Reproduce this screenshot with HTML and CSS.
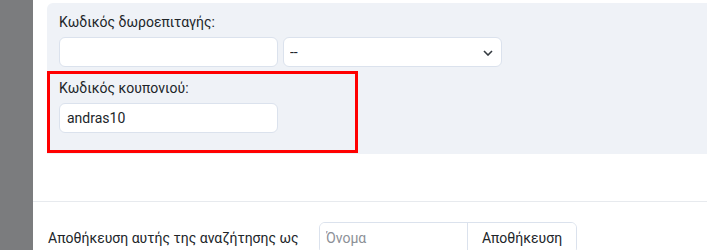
FILE: index.html
```html
<!DOCTYPE html>
<html lang="el">
<head>
    <meta charset="UTF-8">
    <meta name="viewport" content="width=device-width, initial-scale=1.0">
    <title>Αναζήτηση</title>
    <link rel="stylesheet" href="styles.css">
</head>
<body>
    <div class="screen">
        <div class="backdrop"></div>

        <div class="modal">
            <div class="modal-body">
                <div class="filter-panel">
                    <div class="form-group">
                        <label class="form-label">Κωδικός δωροεπιταγής:</label>
                        <div class="input-row">
                            <input type="text" class="form-input">
                            <div class="select-wrap">
                                <select class="form-select">
                                    <option>--</option>
                                </select>
                                <svg class="select-arrow" width="10" height="6" viewBox="0 0 10 6">
                                    <path d="M1 1l4 4 4-4" fill="none" stroke="#343a40" stroke-width="1.6"/>
                                </svg>
                            </div>
                        </div>
                    </div>

                    <div class="form-group highlighted">
                        <label class="form-label">Κωδικός κουπονιού:</label>
                        <input type="text" class="form-input" value="andras10">
                    </div>
                </div>
            </div>

            <div class="modal-footer">
                <span class="save-label">Αποθήκευση αυτής της αναζήτησης ως</span>
                <div class="input-group">
                    <input type="text" class="group-input" placeholder="Όνομα">
                    <button class="group-button">Αποθήκευση</button>
                </div>
            </div>
        </div>
    </div>
</body>
</html>
```

FILE: styles.css
```css
html, body {
    margin: 0;
    padding: 0;
    overflow: hidden;
}
body {
    font-family: Roboto, "Noto Sans", "Liberation Sans", sans-serif;
    font-size: 14px;
    line-height: 1.5;
    color: #212529;
    background-color: #fff;
}
.screen {
    display: flex;
    height: 250px;
    overflow: hidden;
}
.backdrop {
    width: 33px;
    flex-shrink: 0;
    background-color: #7b7c7e;
}
.modal {
    flex: 1;
    display: flex;
    flex-direction: column;
    background-color: #fff;
}
.modal-body {
    flex-shrink: 0;
    padding: 3px 0 0 14px;
    height: 198px;
    border-bottom: 1px solid #e7eaee;
}
.filter-panel {
    background-color: #eff2f7;
    border-top-left-radius: 6px;
    padding-top: 7px;
    height: 144px;
}
.form-group {
    padding-left: 12px;
}
.form-label {
    display: block;
    margin-bottom: 3px;
    line-height: 24px;
}
.input-row {
    display: flex;
    gap: 5px;
}
.form-input,
.form-select {
    box-sizing: border-box;
    width: 219px;
    height: 30px;
    padding: 0 7px;
    border: 1px solid #dbe2ed;
    border-radius: 6px;
    background-color: #fff;
    font-family: inherit;
    font-size: 14px;
    color: #212529;
    outline: none;
}
.select-wrap {
    position: relative;
}
.form-select {
    appearance: none;
    -webkit-appearance: none;
    padding-left: 6px;
}
.select-arrow {
    position: absolute;
    right: 9px;
    top: 13px;
}
.highlighted {
    box-sizing: border-box;
    width: 311px;
    margin-top: 4px;
    padding: 2px 9px 17px 9px;
    border: 3px solid #ff0000;
}
.modal-footer {
    flex-shrink: 0;
    display: flex;
    align-items: center;
    padding: 20px 0 0 15px;
}
.save-label {
    width: 271px;
    flex-shrink: 0;
}
.input-group {
    display: flex;
    height: 30px;
    border: 1px solid #dbe2ed;
    border-radius: 6px;
    overflow: hidden;
}
.group-input {
    box-sizing: border-box;
    width: 148px;
    border: none;
    border-right: 1px solid #dbe2ed;
    padding: 0 6px;
    font-family: inherit;
    font-size: 14px;
    outline: none;
}
.group-input::placeholder {
    color: #8c9097;
}
.group-button {
    width: 108px;
    border: none;
    background-color: #fff;
    font-family: inherit;
    font-size: 14px;
    color: #212529;
    padding: 0;
}
```
